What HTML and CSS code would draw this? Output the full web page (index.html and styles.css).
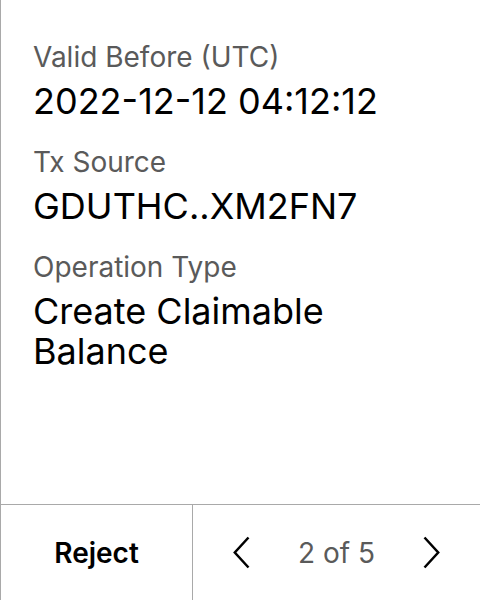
FILE: index.html
```html
<!DOCTYPE html>
<html>
<head>
<meta charset="utf-8">
<link rel="stylesheet" href="styles.css">
</head>
<body>
<div class="panel">
  <div class="content">
    <div class="field">
      <div class="label">Valid Before (UTC)</div>
      <div class="value">2022-12-12 04:12:12</div>
    </div>
    <div class="field">
      <div class="label">Tx Source</div>
      <div class="value">GDUTHC..XM2FN7</div>
    </div>
    <div class="field">
      <div class="label">Operation Type</div>
      <div class="value">Create Claimable Balance</div>
    </div>
  </div>
  <div class="footer">
    <div class="reject">Reject</div>
    <div class="pager">
      <svg class="chev" width="17" height="33" viewBox="0 0 17 33"><path d="M15.5 1.5 L1.8 16.5 L15.5 31.5" fill="none" stroke="#000" stroke-width="2.5"/></svg>
      <span class="count">2 of 5</span>
      <svg class="chev" width="17" height="33" viewBox="0 0 17 33"><path d="M1.5 1.5 L15.2 16.5 L1.5 31.5" fill="none" stroke="#000" stroke-width="2.5"/></svg>
    </div>
  </div>
</div>
</body>
</html>
```
FILE: styles.css
```css
html, body {
  margin: 0;
  padding: 0;
  background: #fff;
}
body {
  font-family: "Inter", "Noto Sans", sans-serif;
}
.panel {
  width: 480px;
  height: 600px;
  box-sizing: border-box;
  border-left: 1px solid #a9a9a9;
  display: flex;
  flex-direction: column;
}
.content {
  flex: 1;
  padding: 40px 40px 0 32px;
  display: flex;
  flex-direction: column;
  gap: 24px;
}
.field {
  display: flex;
  flex-direction: column;
  gap: 7px;
}
.label {
  font-size: 28px;
  line-height: 34px;
  color: #5a5a5a;
}
.value {
  font-size: 36px;
  line-height: 40px;
  font-weight: 400;
  color: #000;
}
.footer {
  height: 96px;
  border-top: 1px solid #a9a9a9;
  display: flex;
  box-sizing: border-box;
}
.reject {
  width: 191px;
  border-right: 1px solid #a9a9a9;
  display: flex;
  align-items: center;
  justify-content: center;
  font-size: 28px;
  font-weight: 600;
  color: #000;
}
.pager {
  flex: 1;
  display: flex;
  align-items: center;
  justify-content: center;
  gap: 48px;
}
.count {
  font-size: 28px;
  color: #5a5a5a;
}
.chev {
  display: block;
}
```
